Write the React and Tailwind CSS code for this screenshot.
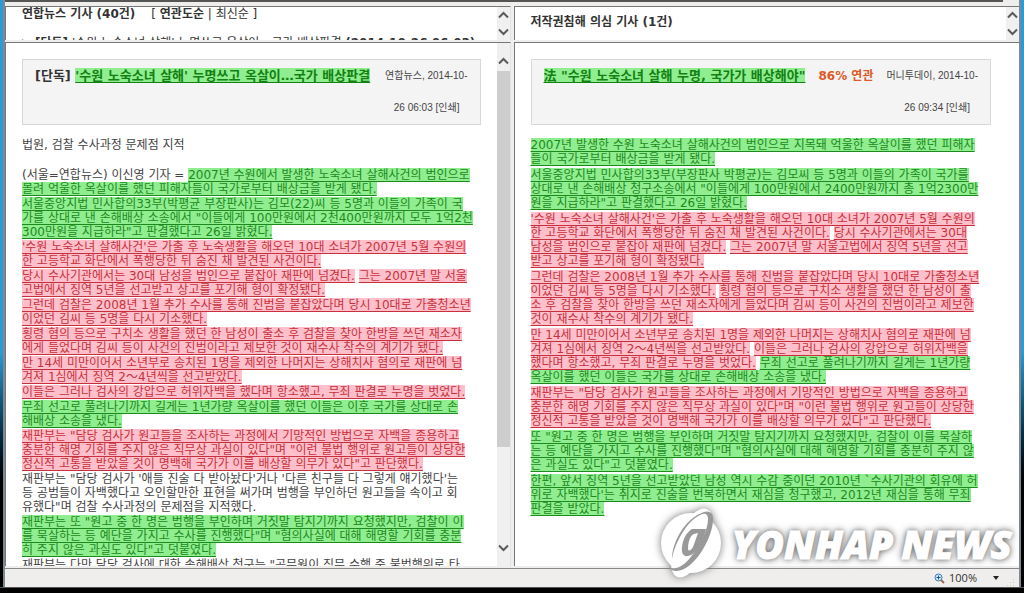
import React from 'react';

const leftArticle = [
    [{ text: '법원, 검찰 수사과정 문제점 지적' }],
    [{ text: ' ' }],
    [{ text: '(서울=연합뉴스) 이신영 기자 = ' }, { type: 'same', text: '2007년 수원에서 발생한 노숙소녀 살해사건의 범인으로\n몰려 억울한 옥살이를 했던 피해자들이 국가로부터 배상금을 받게 됐다.' }],
    [{ type: 'same', text: '서울중앙지법 민사합의33부(박평균 부장판사)는 김모(22)씨 등 5명과 이들의 가족이 국\n가를 상대로 낸 손해배상 소송에서 "이들에게 100만원에서 2천400만원까지 모두 1억2천\n300만원을 지급하라"고 판결했다고 26일 밝혔다.' }],
    [{ type: 'similar', text: "'수원 노숙소녀 살해사건'은 가출 후 노숙생활을 해오던 10대 소녀가 2007년 5월 수원의\n한 고등학교 화단에서 폭행당한 뒤 숨진 채 발견된 사건이다." }],
    [{ type: 'similar', text: '당시 수사기관에서는 30대 남성을 범인으로 붙잡아 재판에 넘겼다.' }, { text: ' ' }, { type: 'similar', text: '그는 2007년 말 서울\n고법에서 징역 5년을 선고받고 상고를 포기해 형이 확정됐다.' }],
    [{ type: 'similar', text: '그런데 검찰은 2008년 1월 추가 수사를 통해 진범을 붙잡았다며 당시 10대로 가출청소년\n이었던 김씨 등 5명을 다시 기소했다.' }],
    [{ type: 'similar', text: '횡령 혐의 등으로 구치소 생활을 했던 한 남성이 출소 후 검찰을 찾아 한방을 쓰던 재소자\n에게 들었다며 김씨 등이 사건의 진범이라고 제보한 것이 재수사 착수의 계기가 됐다.' }],
    [{ type: 'similar', text: '만 14세 미만이어서 소년부로 송치된 1명을 제외한 나머지는 상해치사 혐의로 재판에 넘\n겨져 1심에서 징역 2～4년씩을 선고받았다.' }],
    [{ type: 'similar', text: '이들은 그러나 검사의 강압으로 허위자백을 했다며 항소했고, 무죄 판결로 누명을 벗었다.' }],
    [{ type: 'same', text: '무죄 선고로 풀려나기까지 길게는 1년가량 옥살이를 했던 이들은 이후 국가를 상대로 손\n해배상 소송을 냈다.' }],
    [{ type: 'similar', text: '재판부는 "담당 검사가 원고들을 조사하는 과정에서 기망적인 방법으로 자백을 종용하고\n충분한 해명 기회를 주지 않은 직무상 과실이 있다"며 "이런 불법 행위로 원고들이 상당한\n정신적 고통을 받았을 것이 명백해 국가가 이를 배상할 의무가 있다"고 판단했다.' }],
    [{ text: "재판부는 \"담당 검사가 '애들 진술 다 받아놨다'거나 '다른 친구들 다 그렇게 얘기했다'는\n등 공범들이 자백했다고 오인할만한 표현을 써가며 범행을 부인하던 원고들을 속이고 회\n유했다\"며 검찰 수사과정의 문제점을 지적했다." }],
    [{ type: 'same', text: '재판부는 또 "원고 중 한 명은 범행을 부인하며 거짓말 탐지기까지 요청했지만, 검찰이 이\n를 묵살하는 등 예단을 가지고 수사를 진행했다"며 "혐의사실에 대해 해명할 기회를 충분\n히 주지 않은 과실도 있다"고 덧붙였다.' }],
    [{ text: '재판부는 다만 담당 검사에 대한 손해배상 청구는 "공무원이 직무 수행 중 불법행위로 타' }],
];

const rightArticle = [
    [{ type: 'same', text: '2007년 발생한 수원 노숙소녀 살해사건의 범인으로 지목돼 억울한 옥살이를 했던 피해자\n들이 국가로부터 배상금을 받게 됐다.' }],
    [{ type: 'same', text: '서울중앙지법 민사합의33부(부장판사 박평균)는 김모씨 등 5명과 이들의 가족이 국가를\n상대로 낸 손해배상 청구소송에서 "이들에게 100만원에서 2400만원까지 총 1억2300만\n원을 지급하라"고 판결했다고 26일 밝혔다.' }],
    [{ type: 'similar', text: "'수원 노숙소녀 살해사건'은 가출 후 노숙생활을 해오던 10대 소녀가 2007년 5월 수원의\n한 고등학교 화단에서 폭행당한 뒤 숨진 채 발견된 사건이다." }, { text: ' ' }, { type: 'similar', text: '당시 수사기관에서는 30대\n남성을 범인으로 붙잡아 재판에 넘겼다.' }, { text: ' ' }, { type: 'similar', text: '그는 2007년 말 서울고법에서 징역 5년을 선고\n받고 상고를 포기해 형이 확정됐다.' }],
    [{ type: 'similar', text: '그런데 검찰은 2008년 1월 추가 수사를 통해 진범을 붙잡았다며 당시 10대로 가출청소년\n이었던 김씨 등 5명을 다시 기소했다.' }, { text: ' ' }, { type: 'similar', text: '횡령 혐의 등으로 구치소 생활을 했던 한 남성이 출\n소 후 검찰을 찾아 한방을 쓰던 재소자에게 들었다며 김씨 등이 사건의 진범이라고 제보한\n것이 재수사 착수의 계기가 됐다.' }],
    [{ type: 'similar', text: '만 14세 미만이어서 소년부로 송치된 1명을 제외한 나머지는 상해치사 혐의로 재판에 넘\n겨져 1심에서 징역 2～4년씩을 선고받았다.' }, { text: ' ' }, { type: 'similar', text: '이들은 그러나 검사의 강압으로 허위자백을\n했다며 항소했고, 무죄 판결로 누명을 벗었다.' }, { text: ' ' }, { type: 'same', text: '무죄 선고로 풀려나기까지 길게는 1년가량\n옥살이를 했던 이들은 국가를 상대로 손해배상 소송을 냈다.' }],
    [{ type: 'similar', text: '재판부는 "담당 검사가 원고들을 조사하는 과정에서 기망적인 방법으로 자백을 종용하고\n충분한 해명 기회를 주지 않은 직무상 과실이 있다"며 "이런 불법 행위로 원고들이 상당한\n정신적 고통을 받았을 것이 명백해 국가가 이를 배상할 의무가 있다"고 판단했다.' }],
    [{ type: 'same', text: '또 "원고 중 한 명은 범행을 부인하며 거짓말 탐지기까지 요청했지만, 검찰이 이를 묵살하\n는 등 예단을 가지고 수사를 진행했다"며 "혐의사실에 대해 해명할 기회를 충분히 주지 않\n은 과실도 있다"고 덧붙였다.' }],
    [{ type: 'same', text: "한편, 앞서 징역 5년을 선고받았던 남성 역시 수감 중이던 2010년 `수사기관의 회유에 허\n위로 자백했다'는 취지로 진술을 번복하면서 재심을 청구했고, 2012년 재심을 통해 무죄\n판결을 받았다." }],
];

const getMarkStyle = (type) => {
    if (type === 'same') return 'bg-[#90ee90] text-[#1c8a1c] underline underline-offset-2';
    if (type === 'similar') return 'bg-[#ffc0cb] text-[#c8303c] underline underline-offset-2';
    return 'text-[#444]';
};

const Chevron = ({ up }) => (
    <svg width="11" height="8" viewBox="0 0 11 8" fill="none" stroke="#5a5a5a" strokeWidth="2">
        <path d={up ? 'M1 6.5 5.5 2 10 6.5' : 'M1 1.5 5.5 6 10 1.5'} />
    </svg>
);

const SmallScrollbar = () => (
    <div className="flex w-[13px] shrink-0 flex-col items-center justify-between bg-[#f0f0f0]">
        <button type="button" aria-label="위로" className="flex h-4 w-full items-center justify-center">
            <Chevron up />
        </button>
        <button type="button" aria-label="아래로" className="flex h-4 w-full items-center justify-center">
            <Chevron />
        </button>
    </div>
);

const TallScrollbar = () => (
    <div className="flex w-[13px] shrink-0 flex-col bg-[#f0f0f0]">
        <button type="button" aria-label="위로" className="flex h-7 w-full shrink-0 items-end justify-center pb-1.5">
            <Chevron up />
        </button>
        <div className="w-full grow">
            <div className="h-9/11 w-full bg-[#cdcdcd]" />
        </div>
        <button type="button" aria-label="아래로" className="flex h-9 w-full shrink-0 items-center justify-center">
            <Chevron />
        </button>
    </div>
);

const Article = ({ paragraphs, gap }) => (
    <div className={`flex flex-col whitespace-pre text-[12px] leading-[14px] ${gap}`}>
        {paragraphs.map((parts, index) => (
            <p key={index}>
                {parts.map((part, i) => {
                    const Tag = part.type ? 'mark' : 'span';
                    return <Tag key={i} className={getMarkStyle(part.type)}>{part.text}</Tag>;
                })}
            </p>
        ))}
    </div>
);

const ArticleHeader = ({ children, source, time }) => (
    <header className="mb-[13px] h-[66px] border border-[#d8d8d8] bg-[#f4f4f4] px-3 leading-8">
        <div className="flex items-center justify-between whitespace-nowrap">
            {children}
            <span className="font-['Liberation_Sans','Noto_Sans_CJK_KR',sans-serif] text-[10px] text-[#444]">{source}, 2014-10-</span>
        </div>
        <div className="pr-2 text-right font-['Liberation_Sans','Noto_Sans_CJK_KR',sans-serif] text-[10px] text-[#444]">26 {time} [인쇄]</div>
    </header>
);

const Logo = () => (
    <div className="absolute right-3 bottom-3 flex items-center gap-2">
        <svg width="66" height="76" viewBox="0 0 66 76" className="drop-shadow-[0_0_4px_#777]">
            <circle cx="33" cy="38" r="30" fill="#fff" />
            <ellipse cx="34" cy="38" rx="16" ry="37" fill="#fff" transform="rotate(24 34 38)" />
            <path d="M14 54C14 38 26 14 46 7c6-2 10 2 9 9-1 14-11 34-23 44-8 7-18 8-21 2 7 4 15-2 21-9 10-12 18-28 18-39 0-6-4-6-8-4-14 7-25 28-28 44Z" fill="#999" />
            <path fillRule="evenodd" d="M34 24h14c-2 10-8 22-15 26-6 3-10 0-9-8s4-14 10-18Zm2 5c-4 1-6 9-6 14 0 4 3 3 5-1l5-14Z" fill="#999" />
        </svg>
        <div className="flex gap-2 font-['Open_Sans',sans-serif] text-[39px] leading-none font-extrabold text-white italic [-webkit-text-stroke:1px_white] [text-shadow:0_0_8px_#666,0_0_5px_#999]">
            <span>YONHAP</span>
            <span>NEWS</span>
        </div>
    </div>
);

const App = () => {
    return (
        <div lang="ko" className="relative flex h-screen flex-col overflow-hidden bg-black font-['DejaVu_Sans','Noto_Sans_CJK_KR',sans-serif] text-[#333]">
            <div className="flex min-h-0 grow bg-linear-to-b from-[#2a9bd6] from-60% to-black to-85% pr-[3px] pl-[3px]">
                <div className="flex min-w-0 grow flex-col border-r-2 border-l-2 border-[#7b8a94] bg-[#f0eeed]">
                    <div className="mr-4 h-[2px] shrink-0 bg-[#555]" />
                    <main className="mt-1 grid min-h-0 grow grid-cols-2 grid-rows-[34px_1fr] gap-x-[3px] gap-y-[2px]">
                        <section className="flex overflow-hidden border-t border-r border-l border-t-[#777] border-r-[#e3e3e3] border-l-[#777] bg-white">
                            <div className="min-w-0 grow pl-4 whitespace-pre">
                                <div className="flex h-[29px] gap-4 text-[12px] leading-[14px]">
                                    <h2 className="font-bold">연합뉴스 기사 (40건)</h2>
                                    <span>[ <a href="#relevance" className="font-bold">연관도순</a> | <a href="#latest">최신순</a> ]</span>
                                </div>
                                <p className="text-[12px] leading-[14px]">▶ <b>[단독]</b> '수원 노숙소녀 살해' 누명쓰고 옥살이…국가 배상판결 <b>(2014-10-26 06:03)</b></p>
                            </div>
                            <SmallScrollbar />
                        </section>
                        <section className="flex overflow-hidden border-t border-l border-[#777] bg-white">
                            <h2 className="grow pt-2 pl-4 text-[12px] leading-[14px] font-bold">저작권침해 의심 기사 (1건)</h2>
                            <SmallScrollbar />
                        </section>
                        <section className="flex overflow-hidden border-t border-r border-l border-t-[#777] border-r-[#e3e3e3] border-l-[#777] bg-white">
                            <div className="min-w-0 grow px-4 pt-4">
                                <ArticleHeader source="연합뉴스" time="06:03">
                                    <h3 className="text-[13px] font-bold">[단독] <a href="#left" className="bg-[#90ee90] text-[#128012] underline underline-offset-2">'수원 노숙소녀 살해' 누명쓰고 옥살이…국가 배상판결</a></h3>
                                </ArticleHeader>
                                <Article paragraphs={leftArticle} gap="gap-px" />
                            </div>
                            <TallScrollbar />
                        </section>
                        <section className="overflow-hidden border-t border-l border-[#777] bg-white pt-4 pr-7 pl-4">
                            <ArticleHeader source="머니투데이" time="09:34">
                                <h3 className="text-[13px] font-bold"><a href="#right" className="bg-[#90ee90] text-[#128012] underline underline-offset-2">法 "수원 노숙소녀 살해 누명, 국가가 배상해야"</a></h3>
                                <strong className="text-[12px] text-[#dc5a28]">86% 연관</strong>
                            </ArticleHeader>
                            <Article paragraphs={rightArticle} gap="gap-0.5" />
                        </section>
                    </main>
                    <footer className="mt-[2px] flex h-[19px] shrink-0 items-center justify-end gap-1 border-t border-[#888] pr-1 font-['Open_Sans',sans-serif] text-[11px]">
                        <svg width="11" height="11" viewBox="0 0 11 11" fill="none">
                            <path d="m7 7 3 3" stroke="#a06c3c" strokeWidth="2" />
                            <circle cx="4.5" cy="4.5" r="3.5" fill="#d8ecfa" stroke="#3878b8" />
                            <path d="M2.5 4.5h4m-2-2v4" stroke="#205090" />
                        </svg>
                        <span>100%</span>
                        <button type="button" aria-label="확대 수준" className="mr-1 ml-3 border-x-[3px] border-t-4 border-transparent border-t-[#222]" />
                        <svg width="8" height="8" viewBox="0 0 8 8" fill="#ccc" className="self-end">
                            <path d="M6 0h1v1H6zM3 3h1v1H3zM6 3h1v1H6zM0 6h1v1H0zM3 6h1v1H3zM6 6h1v1H6z" />
                        </svg>
                    </footer>
                </div>
            </div>
            <div className="h-[6px] shrink-0 border-t border-[#555] bg-black" />
            <Logo />
        </div>
    );
};

export default App;
